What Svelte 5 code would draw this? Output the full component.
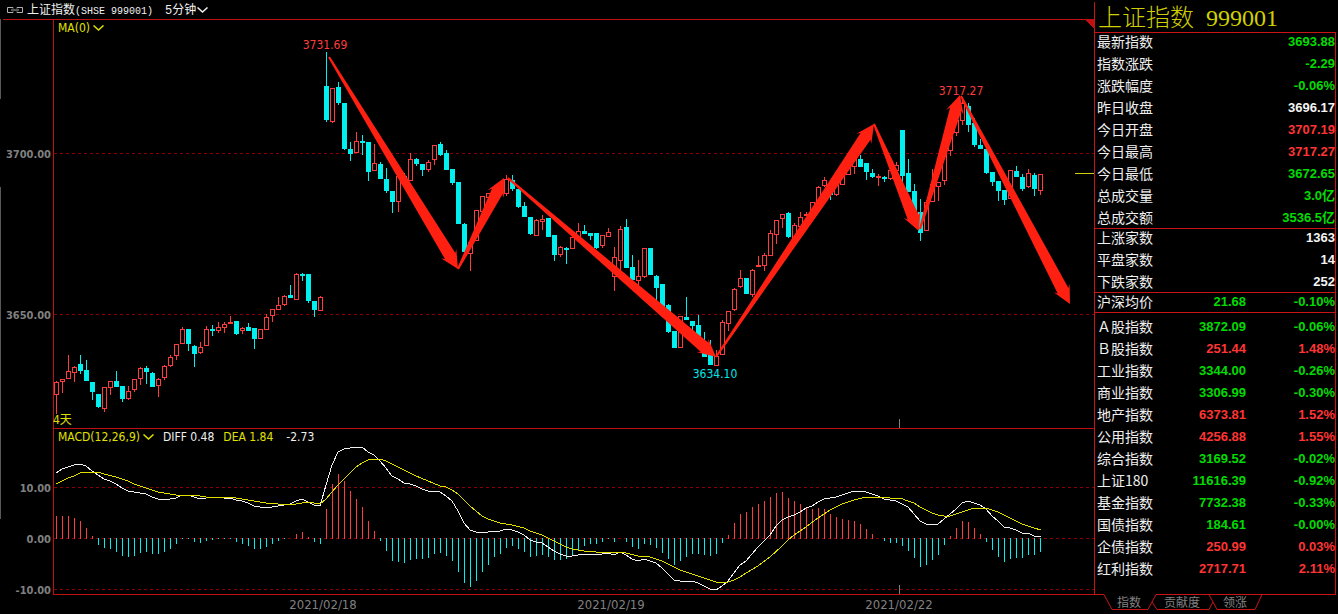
<script>
  // Each candle: direction (1 up, 0 down), high, body top, body bottom, low
  const candles = [
    [1,381,382,395,414],[1,379,379,382,393],[1,355,371,379,379],[1,366,367,373,382],[0,355,364,371,374],
    [0,360,370,381,381],[0,382,382,392,400],[0,394,394,407,408],[1,387,387,409,412],[1,381,381,388,395],
    [0,371,381,387,387],[0,386,386,399,402],[1,386,391,399,400],[1,379,379,390,392],[1,367,368,379,385],
    [0,366,368,372,384],[0,372,373,387,387],[1,378,379,386,397],[1,365,366,378,380],[1,355,357,366,367],
    [1,344,344,356,360],[1,327,329,344,344],[0,329,329,344,351],[0,345,346,354,367],[1,342,347,353,354],
    [1,326,329,346,346],[0,325,329,331,336],[1,322,327,331,333],[1,322,324,328,333],[1,316,322,324,324],
    [0,321,321,334,335],[1,327,328,331,334],[0,323,327,331,331],[0,328,328,339,349],[1,329,329,339,339],
    [1,314,317,330,330],[1,309,309,316,322],[1,297,305,310,310],[1,295,296,305,306],[0,285,295,298,298],
    [1,273,274,300,300],[0,273,274,276,281],[0,274,274,301,303],[0,301,301,310,317],[1,296,297,311,311],
    [0,52,86,120,122],[1,88,88,122,123],[0,82,87,103,105],[0,103,103,149,150],[0,142,149,154,161],
    [1,132,141,153,153],[0,135,141,143,155],[0,142,142,172,181],[1,144,163,171,171],[0,162,164,179,179],
    [0,168,179,191,193],[0,191,191,202,213],[1,176,176,202,212],[0,173,176,180,180],[1,153,159,181,181],
    [0,158,159,164,166],[0,164,164,170,176],[1,160,162,170,172],[1,145,145,160,165],[0,142,144,155,156],
    [0,150,153,170,170],[0,169,169,183,185],[0,182,182,224,224],[0,223,224,252,252],[1,240,242,254,271],
    [1,210,210,241,241],[1,196,196,212,212],[1,193,193,198,198],[1,188,190,195,195],[0,185,188,191,195],
    [1,175,179,194,196],[0,175,180,189,191],[0,189,189,207,208],[0,202,206,217,217],[0,217,217,234,235],
    [1,219,220,236,236],[1,215,219,222,230],[0,218,218,237,237],[0,235,235,255,261],[1,246,247,255,257],
    [0,247,248,250,264],[1,237,237,249,249],[1,223,231,240,240],[0,225,231,234,234],[0,233,233,236,240],
    [0,233,233,248,249],[1,235,235,246,248],[1,228,232,237,237],[1,247,257,277,291],[1,226,229,261,271],
    [0,219,227,268,268],[0,255,267,280,282],[1,260,276,281,286],[1,248,248,277,278],[0,248,248,275,275],
    [0,275,276,288,300],[0,284,284,310,310],[0,304,305,332,333],[0,331,331,348,348],[1,316,316,348,348],
    [0,297,317,320,320],[0,321,321,326,332],[0,315,325,340,340],[0,332,342,357,357],[0,340,350,365,365],
    [1,350,356,366,366],[1,320,322,355,355],[1,311,311,324,331],[1,288,289,310,311],[1,270,278,287,288],
    [0,278,278,294,294],[1,269,270,295,297],[1,256,265,267,267],[1,253,255,266,271],[1,230,233,256,256],
    [1,220,220,235,244],[1,214,214,219,228],[0,212,213,237,238],[1,223,225,240,240],[1,212,217,227,227],
    [1,212,214,216,216],[1,202,202,214,214],[1,186,187,204,204],[1,177,180,186,187],[0,183,185,195,200],
    [1,185,185,195,196],[1,174,174,185,185],[1,167,167,175,175],[1,159,159,167,174],[0,155,159,167,167],
    [0,163,163,172,180],[0,169,173,177,178],[1,174,176,178,186],[0,176,177,179,182],[1,170,170,179,180],
    [1,162,165,171,172],[0,130,130,176,187],[0,159,173,192,192],[0,184,191,211,211],[0,199,212,233,241],
    [1,200,202,231,231],[1,169,184,202,202],[1,182,182,187,201],[1,149,149,181,185],[1,131,131,151,156],
    [1,120,120,133,136],[1,98,103,121,125],[0,103,106,125,132],[0,118,123,145,147],[0,139,145,149,149],
    [0,149,149,173,174],[0,172,172,182,186],[0,181,181,191,201],[0,190,190,200,205],[1,170,170,199,199],
    [0,166,171,177,177],[0,174,177,189,191],[1,169,173,187,188],[0,173,175,189,196],[1,174,174,191,195]
  ];

  // Free end of every MACD bar; the other end is the zero line
  const zero = 538;
  const bars = [
    516,516,516,518,521,528,536,545,548,549,552,556,557,556,553,552,554,554,552,549,544,539,539,542,543,541,
    540,539,539,539,542,544,546,549,549,547,544,541,539,538,534,532,537,542,544,509,484,474,481,491,499,507,
    521,531,541,551,561,562,563,560,559,559,558,554,553,556,561,572,583,587,581,572,565,557,554,548,546,549,
    552,557,556,555,557,560,560,559,555,550,546,544,544,542,539,542,538,542,547,549,544,545,548,553,559,565,
    561,557,554,554,555,556,554,543,535,523,514,512,507,504,501,497,493,492,498,501,504,507,509,508,509,514,
    517,519,520,521,524,529,534,538,541,543,543,546,551,558,567,565,560,555,545,536,528,521,522,528,534,542,
    550,557,562,559,558,558,555,555,552
  ];

  const diff = '56,473 62,469 68,467 74,465 80,464 86,466 92,471 98,475 104,479 110,481 116,484 122,488 128,491 134,492 140,493 146,494 152,497 158,499 164,500 170,499 176,498 182,495 188,495 194,497 200,499 206,498 212,497 218,497 224,498 230,498 236,500 242,501 248,503 254,506 260,507 272,507 278,506 284,505 290,504 296,501 302,499 308,502 314,505 320,506 326,485 332,465 338,452 344,449 350,448 356,447 362,447 368,452 374,455 380,461 386,468 392,476 398,479 404,483 410,484 416,486 422,489 428,491 440,492 446,496 452,501 458,511 464,523 470,530 476,532 482,533 488,532 500,531 506,529 512,530 518,532 524,535 530,540 536,542 542,543 548,547 554,551 560,554 566,556 572,556 578,555 584,554 590,554 596,555 602,554 608,553 614,555 620,552 626,555 632,559 638,561 644,559 650,561 656,563 662,568 668,574 674,580 680,581 692,581 698,583 704,586 710,589 716,590 722,586 728,581 734,573 740,565 746,561 752,554 758,547 764,541 770,535 776,526 782,520 788,517 794,515 800,512 806,508 812,506 818,502 824,499 830,498 836,497 842,495 848,493 854,491 866,492 872,494 878,496 884,499 890,500 896,501 902,504 908,507 914,514 920,521 926,524 938,524 944,519 950,514 956,509 962,503 968,501 974,503 980,505 986,509 992,516 998,521 1004,527 1010,528 1016,530 1022,533 1028,533 1034,536 1041,536';
  const dea = '56,484 68,478 74,476 80,473 86,472 98,472 104,474 116,477 128,481 134,484 146,488 152,490 158,492 164,493 176,495 194,495 206,497 230,497 242,499 254,501 266,503 278,504 296,504 308,502 320,504 326,499 332,492 338,485 344,479 350,473 356,467 362,463 368,460 374,459 380,459 386,461 392,464 404,470 416,476 428,481 440,486 446,487 452,490 458,494 464,500 470,506 476,511 482,516 488,519 494,521 500,523 512,525 524,528 530,531 536,533 542,535 548,538 554,541 560,544 566,547 572,549 584,551 596,552 626,553 638,556 650,557 662,561 668,564 674,567 680,570 686,572 698,576 710,580 716,582 728,582 734,580 740,577 746,573 758,566 770,557 782,546 788,540 794,535 806,527 818,518 830,510 842,504 854,500 866,497 884,497 890,498 900,498 908,501 914,503 920,507 932,513 938,515 944,516 950,516 956,514 962,512 974,508 986,508 998,512 1010,518 1022,524 1034,528 1041,530';

  // Trend arrows: tail x, tail y, tip x, tip y
  const trends = [
    [329,57,458,269],[458,269,504,178],[508,178,716,357],[716,357,874,124],
    [874,124,919,231],[920,229,960,95],[961,96,1070,304]
  ];

  function arrow([x1, y1, x2, y2]) {
    const len = Math.hypot(x2 - x1, y2 - y1);
    const ux = (x2 - x1) / len;
    const uy = (y2 - y1) / len;
    const at = (x, y, back, side) =>
      `${(x - ux * back - uy * side).toFixed(1)},${(y - uy * back + ux * side).toFixed(1)}`;
    return [
      at(x1, y1, 0, 1), at(x2, y2, 15, 6), at(x2, y2, 18, 9), at(x2, y2, 0, 0),
      at(x2, y2, 18, -9), at(x2, y2, 15, -6), at(x1, y1, 0, -1)
    ].join(' ');
  }

  const sections = [
    [
      ['最新指数', '', '3693.88', 'down'], ['指数涨跌', '', '-2.29', 'down'], ['涨跌幅度', '', '-0.06%', 'down'],
      ['昨日收盘', '', '3696.17', 'flat'], ['今日开盘', '', '3707.19', 'up'], ['今日最高', '', '3717.27', 'up'],
      ['今日最低', '', '3672.65', 'down'], ['总成交量', '', '3.0亿', 'down'], ['总成交额', '', '3536.5亿', 'down']
    ],
    [['上涨家数', '', '1363', 'flat'], ['平盘家数', '', '14', 'flat'], ['下跌家数', '', '252', 'flat']],
    [['沪深均价', '21.68', '-0.10%', 'down']],
    [
      ['Ａ股指数', '3872.09', '-0.06%', 'down'], ['Ｂ股指数', '251.44', '1.48%', 'up'],
      ['工业指数', '3344.00', '-0.26%', 'down'], ['商业指数', '3306.99', '-0.30%', 'down'],
      ['地产指数', '6373.81', '1.52%', 'up'], ['公用指数', '4256.88', '1.55%', 'up'],
      ['综合指数', '3169.52', '-0.02%', 'down'], ['上证180', '11616.39', '-0.92%', 'down'],
      ['基金指数', '7732.38', '-0.33%', 'down'], ['国债指数', '184.61', '-0.00%', 'down'],
      ['企债指数', '250.99', '0.03%', 'up'], ['红利指数', '2717.71', '2.11%', 'up']
    ]
  ];
</script>

{#snippet chevron()}
  <svg width="11" height="6" viewBox="0 0 11 6" aria-hidden="true">
    <path d="M.5.5l5 4.500l5-4.500" fill="none" stroke="currentColor" stroke-width="1.5" />
  </svg>
{/snippet}

<main>
  <section class="charts">
    <header>
      <svg width="16" height="6" viewBox="0 0 16 6" aria-hidden="true">
        <path d="M6 1.5V.5H.5v5H6v-1M10 1.5V.5h5.500v5H10v-1M4 3h8" fill="none" stroke="#b0b0b0" />
      </svg>
      <h1>上证指数<span>(SHSE 999001)</span></h1>
      <label>
        <select aria-label="周期"><option>5分钟</option></select>
        {@render chevron()}
      </label>
    </header>

    <div class="pane">
      <div class="legend">
        <button class="yellow">MA(0){@render chevron()}</button>
      </div>
      <svg class="plot" viewBox="0 19 1094 409">
        <g shape-rendering="crispEdges">
          <path d="M0 19h1v80h-1zM0 187h1v241h-1z" fill="#585858" />
          <path class="grid" d="M54 153.5H1094M54 314.5H1094" />
          <path class="frame" d="M3 19.500H1094M53.500 19V428" />
          <path d="M1085 19h9v10z" fill="#c01010" />
          <path d="M1075 173.500h19" stroke="#d0d010" />
          <path d="M899.500 419v9" stroke="#808080" />
          {#each candles as [up, high, top, bottom, low], i}
            {@const x = 56 + i * 6}
            {#if up}
              <path class="rise" d="M{x + 0.5} {high}V{top}M{x + 0.5} {bottom}V{low}" />
              <rect class="rise" x={x - 1.5} y={top + 0.5} width="4" height={bottom - top - 1} />
            {:else}
              <path class="fall" d="M{x} {high}h1V{low}h-1zM{x - 2} {top}h5V{bottom}h-5z" />
            {/if}
          {/each}
        </g>
        {#each trends as t}
          <polygon points={arrow(t)} fill="#ff2012" />
        {/each}
        <text class="axis" x="51" y="158" text-anchor="end">3700.00</text>
        <text class="axis" x="51" y="319" text-anchor="end">3650.00</text>
        <text x="325" y="49" text-anchor="middle" fill="#ff3c3c">3731.69</text>
        <text x="961" y="95" text-anchor="middle" fill="#ff3c3c">3717.27</text>
        <text x="715" y="378" text-anchor="middle" fill="#00e8e8">3634.10</text>
        <text x="53" y="424" fill="#e0e000">4天</text>
      </svg>
    </div>

    <div class="pane">
      <div class="legend">
        <button class="yellow">MACD(12,26,9){@render chevron()}</button>
        <span>DIFF 0.48</span>
        <span class="yellow">DEA 1.84</span>
        <span class="hist">-2.73</span>
      </div>
      <svg class="plot" viewBox="0 428 1094 186">
        <g shape-rendering="crispEdges">
          <path d="M0 428h1v91h-1z" fill="#585858" />
          <path class="grid" d="M54 487.500H1094M54 538.500H1094M54 589.500H1094" />
          <path class="frame" d="M53 428.500H1094M53.500 428V594.500H1094" />
          <path d="M899.500 585v9" stroke="#808080" />
          {#each bars as end, i}
            {@const x = 56.5 + i * 6}
            {#if end < zero}
              <path class="rise" d="M{x} {end}V539" />
            {:else if end > zero}
              <path d="M{x} {zero}V{end}" stroke="#00f0f0" />
            {/if}
          {/each}
          <polyline points={diff} fill="none" stroke="#f0f0f0" />
          <polyline points={dea} fill="none" stroke="#e0e000" />
        </g>
        <text class="axis" x="51" y="492" text-anchor="end">10.00</text>
        <text class="axis" x="51" y="543" text-anchor="end">0.00</text>
        <text class="axis" x="51" y="594" text-anchor="end">-10.00</text>
        <text class="date" x="323" y="609" text-anchor="middle">2021/02/18</text>
        <text class="date" x="611" y="609" text-anchor="middle">2021/02/19</text>
        <text class="date" x="899" y="609" text-anchor="middle">2021/02/22</text>
      </svg>
    </div>
  </section>

  <aside>
    <div class="quotes">
      <h2><span>上证指数</span><span>999001</span></h2>
      {#each sections as rows}
        <table>
          <tbody>
            {#each rows as [name, value, change, tone]}
              <tr class={tone}>
                <th scope="row">{name}</th>
                <td>{value}</td>
                <td>{change}</td>
              </tr>
            {/each}
          </tbody>
        </table>
      {/each}
    </div>
    <nav>
      <svg width="244" height="16" viewBox="0 0 244 16" aria-hidden="true">
        <path d="M0 .5H10L18 15.500H54L62 .5H242M58 8L63 15.500H115L119 8M115 .5L123 15.500H161L168 .5" fill="none" stroke="#c81414" />
      </svg>
      <button>指数</button>
      <button>贡献度</button>
      <button>领涨</button>
    </nav>
  </aside>
</main>

<style>
  :global(body) {
    margin: 0;
    background: #000;
  }
  main {
    display: grid;
    grid-template-columns: minmax(0, 1fr) 244px;
    background: #000;
    color: #f0f0f0;
    font: 12px/16px 'DejaVu Sans Condensed', 'Noto Sans CJK SC', sans-serif;
  }
  button,
  select {
    margin: 0;
    padding: 0;
    border: 0;
    background: none;
    color: inherit;
    font: inherit;
    appearance: none;
    cursor: pointer;
  }
  header {
    display: flex;
    align-items: center;
    height: 19px;
    padding-left: 7px;
    font: 12px/16px 'Liberation Mono', 'Noto Sans CJK SC', monospace;
  }
  h1 {
    margin: 0 12px 0 4px;
    padding-top: 3px;
    font: inherit;
  }
  h1 span {
    font-size: 10px;
  }
  label {
    display: flex;
    align-items: center;
  }
  select {
    width: 32px;
    height: 19px;
    padding-top: 3px;
    background: #000;
  }
  .pane {
    position: relative;
  }
  .legend {
    position: absolute;
    top: 1px;
    left: 58px;
    display: flex;
    gap: 9px;
    white-space: nowrap;
  }
  .legend button {
    display: flex;
    align-items: center;
    gap: 3px;
  }
  .hist {
    margin-left: 4px;
  }
  .yellow {
    color: #e0e000;
  }
  .plot {
    display: block;
    width: 100%;
  }
  .grid {
    stroke: #8c0000;
    stroke-dasharray: 3 3;
  }
  .frame {
    fill: none;
    stroke: #c01010;
  }
  .rise {
    fill: #000;
    stroke: #ff3c3c;
  }
  .fall {
    fill: #00f0f0;
  }
  .axis,
  .date {
    fill: #808080;
  }
  .axis {
    font-weight: bold;
    font-size: 11px;
  }
  .date {
    font-size: 13px;
  }
  aside {
    display: flex;
    flex-direction: column;
  }
  .quotes {
    flex: 1;
    box-sizing: border-box;
    margin: 2px 2px 0 0;
    border-left: 1px solid #c81414;
  }
  h2 {
    display: flex;
    gap: 12px;
    margin: 0;
    padding-left: 3px;
    height: 30px;
    color: #d0d000;
    font: 24px/32px 'Liberation Serif', 'Noto Sans CJK SC', serif;
    font-weight: 300;
  }
  table {
    display: block;
    padding-bottom: 1px;
    border-top: 1px solid #c81414;
    border-right: 1px solid #c81414;
  }
  table:last-child {
    padding: 5px 0 16px;
  }
  tbody {
    display: grid;
    row-gap: 4px;
  }
  tr {
    display: grid;
    grid-template-columns: 70px 1fr 89px;
    padding-left: 2px;
    height: 18px;
  }
  th {
    padding: 0;
    color: #f0f0f0;
    font: 14px/16px 'Noto Sans CJK SC', sans-serif;
    text-align: left;
    white-space: nowrap;
  }
  td {
    padding: 0;
    font: bold 13px/18px 'Liberation Sans', 'Noto Sans CJK SC', sans-serif;
    text-align: right;
    white-space: nowrap;
  }
  .up {
    color: #ff3434;
  }
  .down {
    color: #00dc00;
  }
  .flat {
    color: #f4f4f4;
  }
  nav {
    position: relative;
    display: flex;
    gap: 23px;
    height: 20px;
    padding-left: 23px;
    color: #808080;
    font: 12px/16px 'Noto Sans CJK SC', sans-serif;
  }
  nav svg {
    position: absolute;
    top: 0;
    left: 0;
  }
  nav button {
    position: relative;
    height: 16px;
  }
</style>
